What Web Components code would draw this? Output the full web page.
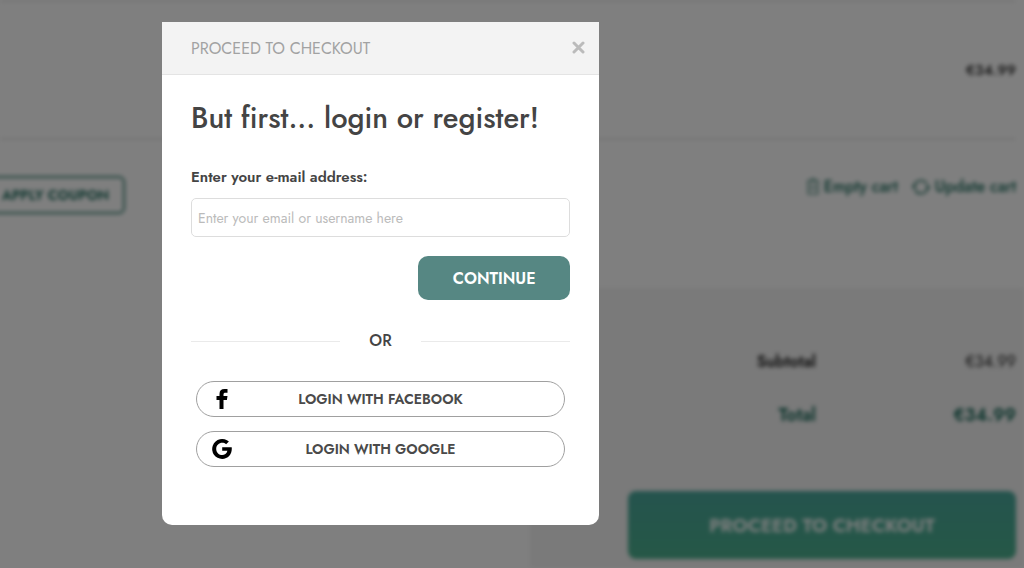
<!DOCTYPE html>
<html lang="en">
<head>
<meta charset="utf-8">
<meta name="viewport" content="width=device-width, initial-scale=1">
<title>Proceed to checkout</title>
<style>
  html, body {
    height: 100%;
    margin: 0;
  }
  body {
    overflow: hidden;
    background: #fff;
    color: #444;
    font-family: Jost, Lato, "Liberation Sans", sans-serif;
  }
</style>
</head>
<body>
  <cart-page></cart-page>
  <login-modal heading="PROCEED TO CHECKOUT">
    <login-form></login-form>
  </login-modal>

<script>
;(function() {
  function define(name, templateString, setup) {
    const template = document.createElement('template')
    template.innerHTML = templateString

    customElements.define(name, class extends HTMLElement {
      constructor() {
        super()
        const shadow = this.attachShadow({ mode: 'open' })
        shadow.appendChild(template.content.cloneNode(true))
      }

      connectedCallback() {
        if (setup) {
          setup(this, this.shadowRoot)
        }
      }
    })
  }

  // one label / amount line of the totals
  define('total-row', `
    <style>
      :host {
        display: flex;
        justify-content: space-between;
        color: #222;
        line-height: 24px;
        font-size: 16px;
      }
      .label {
        width: 188px;
        text-align: right;
        font-weight: 600;
      }
      :host([grand]) {
        color: #1a6a5a;
        font-size: 18px;
        font-weight: 600;
      }
    </style>
    <span class="label"><slot name="label"></slot></span>
    <slot></slot>
  `)

  // the cart behind the dialog
  define('cart-page', `
    <style>
      :host {
        display: flex;
        flex-direction: column;
        height: 100%;
        filter: blur(2px);
      }
      button {
        font-family: inherit;
      }
      .item {
        display: flex;
        justify-content: flex-end;
        align-items: center;
        height: 136px;
        margin-right: 8px;
        border-top: 2px solid #e8e8e8;
        border-bottom: 2px solid #e8e8e8;
        color: #222;
        font-size: 15px;
        font-weight: 500;
      }
      .actions {
        display: flex;
        justify-content: space-between;
        align-items: center;
        padding: 36px 8px 0 0;
      }
      .coupon {
        box-sizing: border-box;
        height: 38px;
        margin-left: -20px;
        padding: 0 14px 0 20px;
        border: 2px solid #3f8577;
        border-radius: 6px;
        background: none;
        color: #1a6a5a;
        font-size: 14px;
        font-weight: 600;
        line-height: 20px;
      }
      .links {
        display: flex;
        gap: 14px;
        padding-bottom: 16px;
      }
      a {
        display: flex;
        align-items: center;
        gap: 5px;
        color: #1a6a5a;
        font-size: 16px;
        font-weight: 500;
        line-height: 20px;
        text-decoration: none;
      }
      .totals {
        box-sizing: border-box;
        flex: 1;
        display: flex;
        flex-direction: column;
        width: 494px;
        margin: 74px 0 0 auto;
        padding: 62px 8px 0 98px;
        background: #f4f4f4;
      }
      total-row + total-row {
        margin-top: 29px;
      }
      .checkout {
        height: 68px;
        margin-top: 64px;
        padding-top: 3px;
        border: 0;
        border-radius: 8px;
        background: linear-gradient(#4aa89c, #4cb08e);
        color: #fff;
        font-size: 19px;
        font-weight: 600;
        line-height: 24px;
      }
    </style>
    <div class="item">€34.99</div>
    <div class="actions">
      <button class="coupon" type="button">APPLY COUPON</button>
      <div class="links">
        <a href="#empty">
          <svg width="12" height="18" viewBox="0 0 12 18" fill="none" stroke="currentColor">
            <path d="M0 3h12M4 3V1h4v2M1 3v13h10V3M4 6v7M8 6v7"/>
          </svg>
          Empty cart
        </a>
        <a href="#update">
          <svg width="18" height="18" viewBox="0 0 18 18" fill="none" stroke="currentColor" stroke-width="1.5">
            <path d="M2 9a7 7 0 0 1 13-3M16 9a7 7 0 0 1-13 3M0 8l2 2 2-2M14 10l2-2 2 2"/>
          </svg>
          Update cart
        </a>
      </div>
    </div>
    <div class="totals">
      <total-row><span slot="label">Subtotal</span>€34.99</total-row>
      <total-row grand><span slot="label">Total</span>€34.99</total-row>
      <button class="checkout" type="button">PROCEED TO CHECKOUT</button>
    </div>
  `)

  // dimmed overlay with the dialog box, content goes in the slot
  define('login-modal', `
    <style>
      :host {
        position: fixed;
        inset: 0;
        box-sizing: border-box;
        padding: 22px 16px 0 162px;
        background: rgba(0, 0, 0, .5);
      }
      .box {
        max-width: 437px;
        border-radius: 0 0 10px 10px;
        background: #fff;
        overflow: hidden;
      }
      header {
        display: flex;
        justify-content: space-between;
        align-items: center;
        height: 52px;
        padding: 0 14px 0 29px;
        border-bottom: 1px solid #e4e4e4;
        background: #f3f3f3;
        color: #a2a2a2;
        font-size: 16px;
      }
      button {
        display: flex;
        padding: 0;
        border: 0;
        background: none;
        color: #bbb;
      }
    </style>
    <div class="box" role="dialog" aria-labelledby="heading">
      <header>
        <span id="heading"></span>
        <button type="button" aria-label="Close">
          <svg width="14" height="14" viewBox="0 0 14 14" stroke="currentColor" stroke-width="3" stroke-linecap="round">
            <path d="M3 2l9 9M12 2l-9 9"/>
          </svg>
        </button>
      </header>
      <slot></slot>
    </div>
  `, (host, shadow) => {
    shadow.getElementById('heading').textContent = host.getAttribute('heading')
    shadow.querySelector('button').addEventListener('click', () => host.remove())
  })

  // pill button, the icon is passed in the "icon" slot
  define('social-button', `
    <style>
      :host {
        display: block;
      }
      button {
        box-sizing: border-box;
        display: grid;
        grid-template-columns: 20px 1fr 20px;
        align-items: center;
        width: 100%;
        height: 36px;
        padding: 0 15px;
        border: 1px solid #a0a0a0;
        border-radius: 18px;
        background: #fff;
        color: #4a4a4a;
        font-family: inherit;
        font-size: 14px;
        font-weight: 600;
        line-height: 20px;
      }
      ::slotted(svg) {
        display: block;
        color: #000;
      }
    </style>
    <button type="button"><slot name="icon"></slot><span><slot></slot></span></button>
  `)

  define('login-form', `
    <style>
      :host {
        display: block;
        padding: 23px 29px 58px;
      }
      h1 {
        margin: 0;
        font-size: 29px;
        font-weight: 500;
        line-height: 40px;
      }
      label {
        display: block;
        margin-top: 29px;
        font-size: 15px;
        font-weight: 600;
        line-height: 20px;
      }
      input,
      button {
        font-family: inherit;
      }
      input {
        box-sizing: border-box;
        width: 100%;
        height: 39px;
        margin-top: 11px;
        padding: 0 6px;
        border: 1px solid #ddd;
        border-radius: 5px;
        color: inherit;
        font-size: 14px;
        line-height: 20px;
      }
      input::placeholder {
        color: #bbb;
      }
      .continue {
        display: block;
        width: 40%;
        height: 44px;
        margin: 19px 0 0 auto;
        padding-top: 2px;
        border: 0;
        border-radius: 10px;
        background: #568783;
        color: #fff;
        font-size: 16px;
        font-weight: 600;
        line-height: 20px;
      }
      .or {
        display: flex;
        align-items: center;
        gap: 29px;
        margin-top: 31px;
        font-size: 16px;
        font-weight: 500;
        line-height: 20px;
      }
      .or::before,
      .or::after {
        content: "";
        flex: 1;
        border-top: 1px solid #eaeaea;
      }
      .social {
        display: grid;
        gap: 14px;
        margin-top: 30px;
        padding: 0 5px;
      }
    </style>
    <form>
      <h1>But first... login or register!</h1>
      <label for="email">Enter your e-mail address:</label>
      <input id="email" type="text" placeholder="Enter your email or username here">
      <button class="continue" type="button">CONTINUE</button>
      <div class="or">OR</div>
      <div class="social">
        <social-button>
          <svg slot="icon" width="20" height="20" viewBox="0 0 20 20" fill="currentColor">
            <path d="M7.500 20v-9H4.500V7h3V5c0-3.300 1.600-5 5-5h3v3.800h-2c-1.400 0-2 .5-2 1.700V7h4l-.6 4h-3.400v9z"/>
          </svg>
          LOGIN WITH FACEBOOK
        </social-button>
        <social-button>
          <svg slot="icon" width="20" height="20" viewBox="0 0 20 20" fill="currentColor">
            <path d="M10.200 8.300H19.700C20.500 14.500 16.500 20 10.200 20A10 10 0 1 1 16.900 2.600L14.100 5.300C10.500 2 4.200 4.300 4.200 10C4.200 16.700 13.800 18.600 15.400 11.800H10.200z"/>
          </svg>
          LOGIN WITH GOOGLE
        </social-button>
      </div>
    </form>
  `)
})()
</script>
</body>
</html>
